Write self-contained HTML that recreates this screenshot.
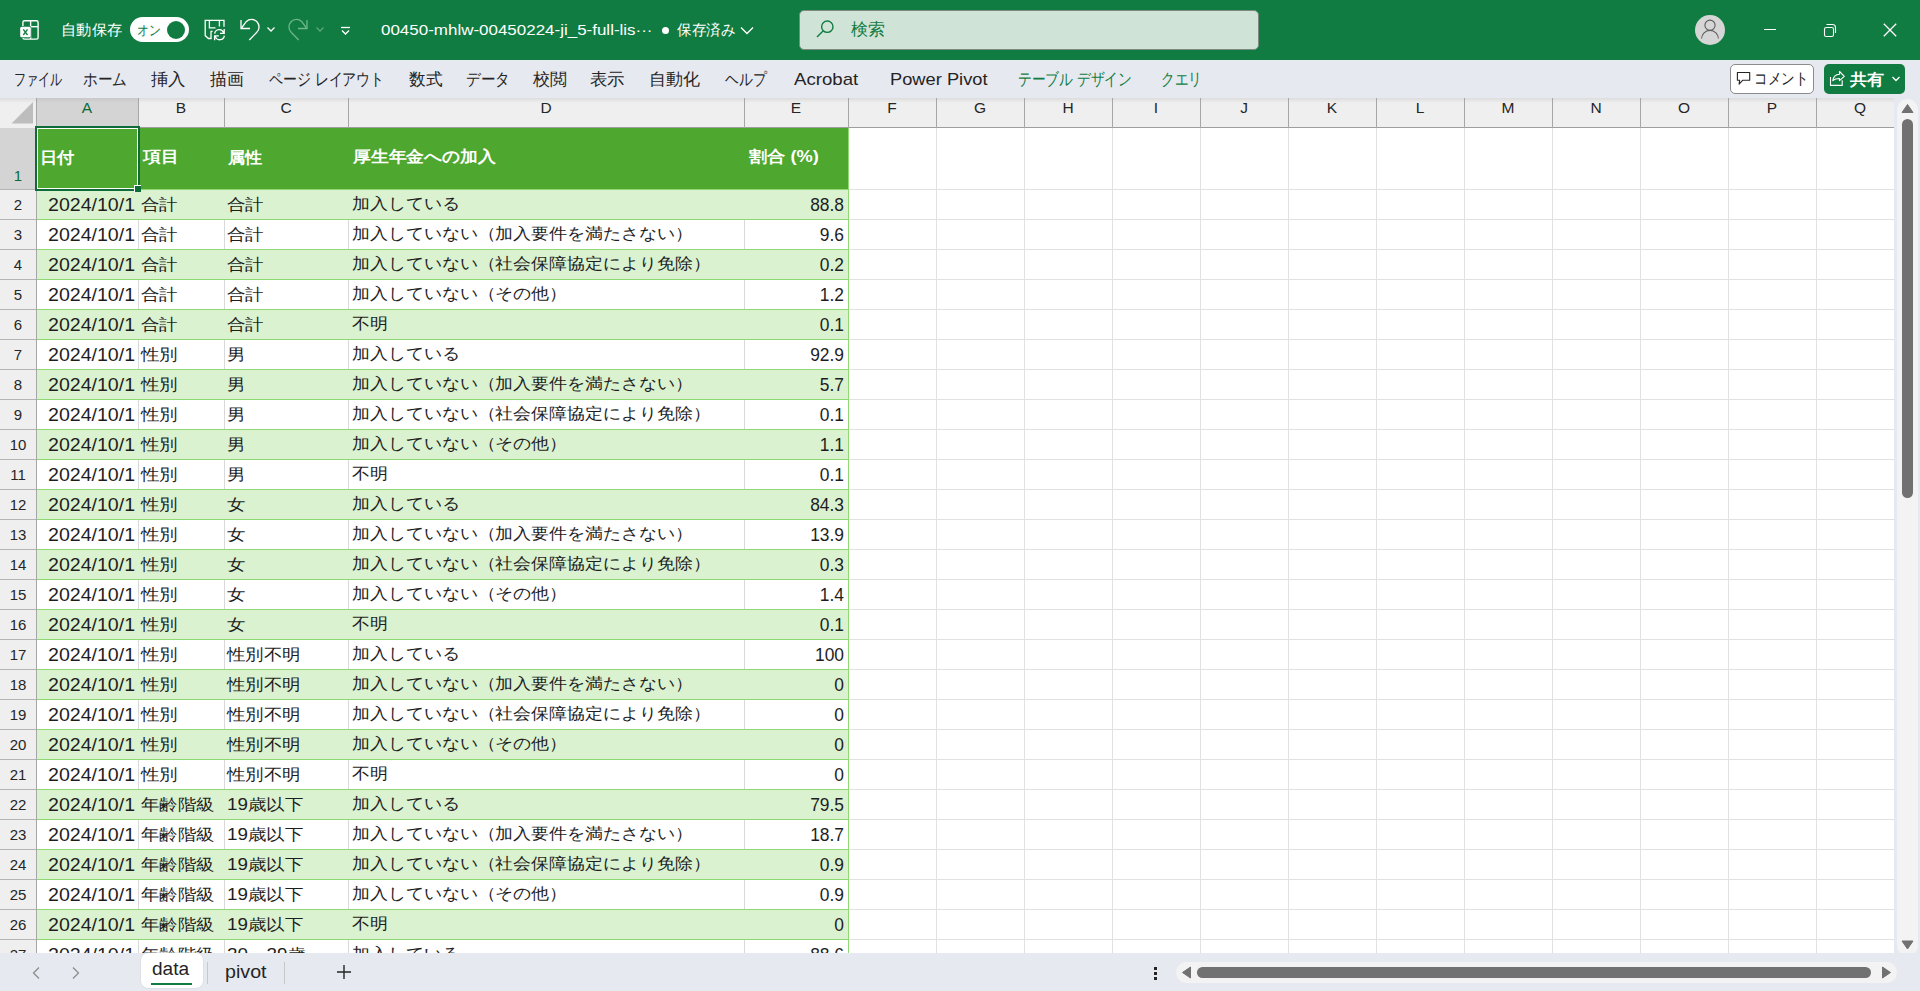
<!DOCTYPE html><html><head><meta charset="utf-8"><style>
*{margin:0;padding:0;box-sizing:border-box}
html,body{width:1920px;height:991px;overflow:hidden;background:#fff;font-family:"Liberation Sans",sans-serif;position:relative}
.a{position:absolute}
.t{position:absolute;white-space:nowrap;line-height:1}
.ch{position:absolute;top:98px;height:30px;background:linear-gradient(#dcdcdc,#efefef 5px,#efefef);border-right:1px solid #a6a6a6;border-bottom:1px solid #9e9e9e}
.rh{position:absolute;left:0;width:37px;background:#efefef;border-right:1px solid #a6a6a6;border-bottom:1px solid #c4c4c4}
</style></head><body>
<div class="a" style="left:0;top:0;width:1920px;height:60px;background:#107c41"></div>
<svg class="a" style="left:18px;top:18px" width="24" height="24" viewBox="0 0 24 24">
<rect x="4.9" y="2.7" width="15.2" height="18.4" rx="1.6" fill="none" stroke="#fff" stroke-width="1.4"/>
<line x1="12.6" y1="2.7" x2="12.6" y2="21" stroke="#fff" stroke-width="1.4"/>
<line x1="12.6" y1="8.7" x2="20" y2="8.7" stroke="#fff" stroke-width="1.4"/>
<rect x="1.4" y="7.9" width="12" height="12" rx="1.8" fill="#107c41"/>
<rect x="2.2" y="8.7" width="10.6" height="10.6" rx="1.5" fill="#fff"/>
<path d="M5.3 11.3L9.5 17M9.5 11.3L5.3 17" stroke="#107c41" stroke-width="1.3"/>
</svg>
<div class="t" id="t_auto" style="left:60.56px;top:22.00px;font-size:15px;color:#fff;transform:scaleX(1.0176);transform-origin:0 0;">自動保存</div>
<div class="a" style="left:130px;top:17px;width:59px;height:25px;border-radius:13px;background:#fff"></div>
<div class="t" id="t_on" style="left:137.15px;top:22.55px;font-size:14px;color:#107c41;transform:scaleX(0.8462);transform-origin:0 0;">オン</div>
<div class="a" style="left:167px;top:21px;width:18px;height:18px;border-radius:9px;background:#107c41"></div>
<svg class="a" style="left:202px;top:18px" width="24" height="24" viewBox="0 0 24 24" fill="none" stroke="#fff" stroke-width="1.3">
<path d="M9.6 20.5H6.4L3.2 17.6V2.3H22V8.7"/><path d="M7.4 2.3V9.9H13.5M17.4 2.3V8.6"/><path d="M9 20.5V13.4H10.6"/>
<path d="M12.7 15.6A4.6 4.6 0 0 1 21.6 14.6M22.2 11V15.3H18"/><path d="M22.3 17.6A4.6 4.6 0 0 1 13.3 18.4M12.6 22.2V17.8H16.8"/>
</svg>
<svg class="a" style="left:238px;top:18px" width="24" height="24" viewBox="0 0 24 24" fill="none" stroke="#fff" stroke-width="1.3">
<path d="M3 2v8.5h9"/><path d="M3.5 10L8.2 3.7A7.5 7.5 0 1 1 18.6 14.5L11.3 22"/></svg>
<svg class="a" style="left:266px;top:25px" width="10" height="8" viewBox="0 0 10 8" fill="none" stroke="#fff" stroke-width="1.3"><path d="M1.5 2.5l3.5 3.5 3.5-3.5"/></svg>
<svg class="a" style="left:286px;top:18px" width="24" height="24" viewBox="0 0 24 24" fill="none" stroke="#6fb68b" stroke-width="1.3">
<path d="M21 2v8.5h-9"/><path d="M20.5 10L15.8 3.7A7.5 7.5 0 1 0 5.4 14.5L12.7 22"/></svg>
<svg class="a" style="left:315px;top:25px" width="10" height="8" viewBox="0 0 10 8" fill="none" stroke="#5aa77a" stroke-width="1.3"><path d="M1.5 2.5l3.5 3.5 3.5-3.5"/></svg>
<svg class="a" style="left:338px;top:22px" width="14" height="16" viewBox="0 0 14 16" fill="none" stroke="#fff" stroke-width="1.3"><path d="M3 5.5h9"/><path d="M4 8.5l3.5 3.5 3.5-3.5"/></svg>
<div class="t" id="t_file" style="left:380.87px;top:22.00px;font-size:15px;color:#fff;transform:scaleX(1.1308);transform-origin:0 0;">00450-mhlw-00450224-ji_5-full-lis···</div>
<div class="a" style="left:662px;top:27px;width:7px;height:7px;border-radius:4px;background:#fff"></div>
<div class="t" id="t_saved" style="left:677.00px;top:22.00px;font-size:15px;color:#fff;transform:scaleX(0.9695);transform-origin:0 0;">保存済み</div>
<svg class="a" style="left:739px;top:22px" width="16" height="16" viewBox="0 0 16 16" fill="none" stroke="#fff" stroke-width="1.3"><path d="M2 5.5l6 6 6-6"/></svg>
<div class="a" style="left:799px;top:10px;width:460px;height:40px;border-radius:5px;background:#d0e3d7;border:1px solid #7d8a82"></div>
<svg class="a" style="left:814px;top:18px" width="24" height="24" viewBox="0 0 24 24" fill="none" stroke="#107c41" stroke-width="1.4"><circle cx="13.3" cy="8.7" r="5.7"/><path d="M9.3 12.7L3 19"/></svg>
<div class="t" id="t_search" style="left:851.00px;top:21.00px;font-size:17px;color:#107c41;">検索</div>
<svg class="a" style="left:1695px;top:15px" width="30" height="30" viewBox="0 0 30 30">
<circle cx="15" cy="15" r="15" fill="#d6d6d6"/><circle cx="15" cy="10.2" r="5.1" fill="none" stroke="#5c5c5c" stroke-width="1.1"/>
<path d="M6.6 23.6A8.4 8.2 0 0 1 23.4 23.6" fill="none" stroke="#5c5c5c" stroke-width="1.1"/></svg>
<div class="a" style="left:1764px;top:29px;width:12px;height:1px;background:#fff"></div>
<svg class="a" style="left:1820px;top:20px" width="20" height="20" viewBox="0 0 20 20" fill="none" stroke="#fff" stroke-width="1.1">
<rect x="4.5" y="7.5" width="9" height="9" rx="1.8"/><path d="M6.5 4.5H12.5Q15.5 4.5 15.5 7.5V13"/></svg>
<svg class="a" style="left:1880px;top:20px" width="20" height="20" viewBox="0 0 20 20" fill="none" stroke="#fff" stroke-width="1.3">
<path d="M3.8 3.8l12.4 12.4M16.2 3.8L3.8 16.2"/></svg>
<div class="a" style="left:0;top:60px;width:1920px;height:38px;background:#e6e9ef"></div>
<div class="t" id="tab0" style="left:13.78px;top:70.90px;font-size:17px;color:#242424;transform:scaleX(0.7091);transform-origin:0 0;">ファイル</div>
<div class="t" id="tab1" style="left:82.93px;top:70.90px;font-size:17px;color:#242424;transform:scaleX(0.8614);transform-origin:0 0;">ホーム</div>
<div class="t" id="tab2" style="left:151.00px;top:70.90px;font-size:17px;color:#242424;transform:scaleX(1.0244);transform-origin:0 0;">挿入</div>
<div class="t" id="tab3" style="left:209.79px;top:70.90px;font-size:17px;color:#242424;transform:scaleX(0.9883);transform-origin:0 0;">描画</div>
<div class="t" id="tab4" style="left:268.78px;top:70.90px;font-size:17px;color:#242424;transform:scaleX(0.8191);transform-origin:0 0;">ページ レイアウト</div>
<div class="t" id="tab5" style="left:408.60px;top:70.90px;font-size:17px;color:#242424;transform:scaleX(0.9819);transform-origin:0 0;">数式</div>
<div class="t" id="tab6" style="left:466.14px;top:70.90px;font-size:17px;color:#242424;transform:scaleX(0.8596);transform-origin:0 0;">データ</div>
<div class="t" id="tab7" style="left:533.00px;top:70.90px;font-size:17px;color:#242424;">校閲</div>
<div class="t" id="tab8" style="left:589.97px;top:70.90px;font-size:17px;color:#242424;transform:scaleX(1.0253);transform-origin:0 0;">表示</div>
<div class="t" id="tab9" style="left:648.80px;top:70.90px;font-size:17px;color:#242424;">自動化</div>
<div class="t" id="tab10" style="left:724.81px;top:70.90px;font-size:17px;color:#242424;transform:scaleX(0.8117);transform-origin:0 0;">ヘルプ</div>
<div class="t" id="tab11" style="left:794.40px;top:70.90px;font-size:17px;color:#242424;transform:scaleX(1.0951);transform-origin:0 0;">Acrobat</div>
<div class="t" id="tab12" style="left:890.12px;top:70.90px;font-size:17px;color:#242424;transform:scaleX(1.0756);transform-origin:0 0;">Power Pivot</div>
<div class="t" id="tab13" style="left:1018.19px;top:70.90px;font-size:17px;color:#107c41;transform:scaleX(0.8086);transform-origin:0 0;">テーブル デザイン</div>
<div class="t" id="tab14" style="left:1160.80px;top:70.90px;font-size:17px;color:#107c41;transform:scaleX(0.8002);transform-origin:0 0;">クエリ</div>
<div class="a" style="left:1730px;top:64px;width:84px;height:30px;border-radius:5px;background:#fff;border:1px solid #8c8c8c"></div>
<svg class="a" style="left:1735px;top:71px" width="16" height="16" viewBox="0 0 16 16" fill="none" stroke="#242424" stroke-width="1.1"><path d="M2.4 1.5H14.7V9.3H7.6L4.1 13.2L4.6 9.3H2.4Z" stroke-linejoin="round"/></svg>
<div class="t" id="t_comment" style="left:1754.31px;top:71.10px;font-size:16px;color:#242424;transform:scaleX(0.8448);transform-origin:0 0;">コメント</div>
<div class="a" style="left:1824px;top:64px;width:81px;height:30px;border-radius:5px;background:#107c41"></div>
<svg class="a" style="left:1829px;top:70px" width="17" height="17" viewBox="0 0 17 17" fill="none" stroke="#fff" stroke-width="1.1"><path d="M1.5 7.1V15.4H13.2V10.3"/><path d="M3.8 10.6C4.5 6.5 7 4.5 10.5 4.3V1.5L15.3 6.4L10.5 10.6V8.5C7.5 8.5 5.5 9 3.8 10.6Z" stroke-linejoin="round"/></svg>
<div class="t" id="t_share" style="left:1850.00px;top:71.60px;font-size:15.5px;color:#fff;font-weight:bold;transform:scaleX(1.0635);transform-origin:0 0;">共有</div>
<svg class="a" style="left:1890px;top:74px" width="12" height="10" viewBox="0 0 12 10" fill="none" stroke="#fff" stroke-width="1.3"><path d="M2.5 3l3.5 3.5 3.5-3.5"/></svg>
<div class="a" style="left:936px;top:128px;width:1px;height:825px;background:#e1e1e1"></div>
<div class="a" style="left:1024px;top:128px;width:1px;height:825px;background:#e1e1e1"></div>
<div class="a" style="left:1112px;top:128px;width:1px;height:825px;background:#e1e1e1"></div>
<div class="a" style="left:1200px;top:128px;width:1px;height:825px;background:#e1e1e1"></div>
<div class="a" style="left:1288px;top:128px;width:1px;height:825px;background:#e1e1e1"></div>
<div class="a" style="left:1376px;top:128px;width:1px;height:825px;background:#e1e1e1"></div>
<div class="a" style="left:1464px;top:128px;width:1px;height:825px;background:#e1e1e1"></div>
<div class="a" style="left:1552px;top:128px;width:1px;height:825px;background:#e1e1e1"></div>
<div class="a" style="left:1640px;top:128px;width:1px;height:825px;background:#e1e1e1"></div>
<div class="a" style="left:1728px;top:128px;width:1px;height:825px;background:#e1e1e1"></div>
<div class="a" style="left:1816px;top:128px;width:1px;height:825px;background:#e1e1e1"></div>
<div class="a" style="left:1904px;top:128px;width:1px;height:825px;background:#e1e1e1"></div>
<div class="a" style="left:848px;top:189px;width:1046px;height:1px;background:#e1e1e1"></div>
<div class="a" style="left:848px;top:219px;width:1046px;height:1px;background:#e1e1e1"></div>
<div class="a" style="left:848px;top:249px;width:1046px;height:1px;background:#e1e1e1"></div>
<div class="a" style="left:848px;top:279px;width:1046px;height:1px;background:#e1e1e1"></div>
<div class="a" style="left:848px;top:309px;width:1046px;height:1px;background:#e1e1e1"></div>
<div class="a" style="left:848px;top:339px;width:1046px;height:1px;background:#e1e1e1"></div>
<div class="a" style="left:848px;top:369px;width:1046px;height:1px;background:#e1e1e1"></div>
<div class="a" style="left:848px;top:399px;width:1046px;height:1px;background:#e1e1e1"></div>
<div class="a" style="left:848px;top:429px;width:1046px;height:1px;background:#e1e1e1"></div>
<div class="a" style="left:848px;top:459px;width:1046px;height:1px;background:#e1e1e1"></div>
<div class="a" style="left:848px;top:489px;width:1046px;height:1px;background:#e1e1e1"></div>
<div class="a" style="left:848px;top:519px;width:1046px;height:1px;background:#e1e1e1"></div>
<div class="a" style="left:848px;top:549px;width:1046px;height:1px;background:#e1e1e1"></div>
<div class="a" style="left:848px;top:579px;width:1046px;height:1px;background:#e1e1e1"></div>
<div class="a" style="left:848px;top:609px;width:1046px;height:1px;background:#e1e1e1"></div>
<div class="a" style="left:848px;top:639px;width:1046px;height:1px;background:#e1e1e1"></div>
<div class="a" style="left:848px;top:669px;width:1046px;height:1px;background:#e1e1e1"></div>
<div class="a" style="left:848px;top:699px;width:1046px;height:1px;background:#e1e1e1"></div>
<div class="a" style="left:848px;top:729px;width:1046px;height:1px;background:#e1e1e1"></div>
<div class="a" style="left:848px;top:759px;width:1046px;height:1px;background:#e1e1e1"></div>
<div class="a" style="left:848px;top:789px;width:1046px;height:1px;background:#e1e1e1"></div>
<div class="a" style="left:848px;top:819px;width:1046px;height:1px;background:#e1e1e1"></div>
<div class="a" style="left:848px;top:849px;width:1046px;height:1px;background:#e1e1e1"></div>
<div class="a" style="left:848px;top:879px;width:1046px;height:1px;background:#e1e1e1"></div>
<div class="a" style="left:848px;top:909px;width:1046px;height:1px;background:#e1e1e1"></div>
<div class="a" style="left:848px;top:939px;width:1046px;height:1px;background:#e1e1e1"></div>
<div class="ch" style="left:0;width:37px"></div>
<svg class="a" style="left:0;top:98px" width="36" height="29"><path d="M33 4V25.5H11.5Z" fill="#bdbdbd"/></svg>
<div class="ch" style="left:36px;width:103px;background:linear-gradient(#c9c9c9,#d4d4d4 5px,#d4d4d4);"></div>
<div class="t" style="left:36px;width:102px;text-align:center;top:100px;font-size:15.5px;color:#0e6b38;line-height:1">A</div>
<div class="ch" style="left:138px;width:87px;"></div>
<div class="t" style="left:138px;width:86px;text-align:center;top:100px;font-size:15.5px;color:#262626;line-height:1">B</div>
<div class="ch" style="left:224px;width:125px;"></div>
<div class="t" style="left:224px;width:124px;text-align:center;top:100px;font-size:15.5px;color:#262626;line-height:1">C</div>
<div class="ch" style="left:348px;width:397px;"></div>
<div class="t" style="left:348px;width:396px;text-align:center;top:100px;font-size:15.5px;color:#262626;line-height:1">D</div>
<div class="ch" style="left:744px;width:105px;"></div>
<div class="t" style="left:744px;width:104px;text-align:center;top:100px;font-size:15.5px;color:#262626;line-height:1">E</div>
<div class="ch" style="left:848px;width:89px;"></div>
<div class="t" style="left:848px;width:88px;text-align:center;top:100px;font-size:15.5px;color:#262626;line-height:1">F</div>
<div class="ch" style="left:936px;width:89px;"></div>
<div class="t" style="left:936px;width:88px;text-align:center;top:100px;font-size:15.5px;color:#262626;line-height:1">G</div>
<div class="ch" style="left:1024px;width:89px;"></div>
<div class="t" style="left:1024px;width:88px;text-align:center;top:100px;font-size:15.5px;color:#262626;line-height:1">H</div>
<div class="ch" style="left:1112px;width:89px;"></div>
<div class="t" style="left:1112px;width:88px;text-align:center;top:100px;font-size:15.5px;color:#262626;line-height:1">I</div>
<div class="ch" style="left:1200px;width:89px;"></div>
<div class="t" style="left:1200px;width:88px;text-align:center;top:100px;font-size:15.5px;color:#262626;line-height:1">J</div>
<div class="ch" style="left:1288px;width:89px;"></div>
<div class="t" style="left:1288px;width:88px;text-align:center;top:100px;font-size:15.5px;color:#262626;line-height:1">K</div>
<div class="ch" style="left:1376px;width:89px;"></div>
<div class="t" style="left:1376px;width:88px;text-align:center;top:100px;font-size:15.5px;color:#262626;line-height:1">L</div>
<div class="ch" style="left:1464px;width:89px;"></div>
<div class="t" style="left:1464px;width:88px;text-align:center;top:100px;font-size:15.5px;color:#262626;line-height:1">M</div>
<div class="ch" style="left:1552px;width:89px;"></div>
<div class="t" style="left:1552px;width:88px;text-align:center;top:100px;font-size:15.5px;color:#262626;line-height:1">N</div>
<div class="ch" style="left:1640px;width:89px;"></div>
<div class="t" style="left:1640px;width:88px;text-align:center;top:100px;font-size:15.5px;color:#262626;line-height:1">O</div>
<div class="ch" style="left:1728px;width:89px;"></div>
<div class="t" style="left:1728px;width:88px;text-align:center;top:100px;font-size:15.5px;color:#262626;line-height:1">P</div>
<div class="ch" style="left:1816px;width:78px;border-right:none;"></div>
<div class="t" style="left:1816px;width:88px;text-align:center;top:100px;font-size:15.5px;color:#262626;line-height:1">Q</div>
<div class="a" style="left:138px;top:98px;width:1px;height:30px;background:#a6a6a6"></div>
<div class="a" style="left:224px;top:98px;width:1px;height:30px;background:#a6a6a6"></div>
<div class="a" style="left:348px;top:98px;width:1px;height:30px;background:#a6a6a6"></div>
<div class="a" style="left:744px;top:98px;width:1px;height:30px;background:#a6a6a6"></div>
<div class="a" style="left:848px;top:98px;width:1px;height:30px;background:#a6a6a6"></div>
<div class="a" style="left:936px;top:98px;width:1px;height:30px;background:#a6a6a6"></div>
<div class="a" style="left:1024px;top:98px;width:1px;height:30px;background:#a6a6a6"></div>
<div class="a" style="left:1112px;top:98px;width:1px;height:30px;background:#a6a6a6"></div>
<div class="a" style="left:1200px;top:98px;width:1px;height:30px;background:#a6a6a6"></div>
<div class="a" style="left:1288px;top:98px;width:1px;height:30px;background:#a6a6a6"></div>
<div class="a" style="left:1376px;top:98px;width:1px;height:30px;background:#a6a6a6"></div>
<div class="a" style="left:1464px;top:98px;width:1px;height:30px;background:#a6a6a6"></div>
<div class="a" style="left:1552px;top:98px;width:1px;height:30px;background:#a6a6a6"></div>
<div class="a" style="left:1640px;top:98px;width:1px;height:30px;background:#a6a6a6"></div>
<div class="a" style="left:1728px;top:98px;width:1px;height:30px;background:#a6a6a6"></div>
<div class="a" style="left:1816px;top:98px;width:1px;height:30px;background:#a6a6a6"></div>
<div class="a" style="left:0;top:127px;width:36px;height:826px;background:#efefef"></div>
<div class="a" style="left:0;top:128px;width:36px;height:61px;background:#d4d4d4"></div>
<div class="a" style="left:36px;top:98px;width:1px;height:855px;background:#a6a6a6"></div>
<div class="t" style="left:0;width:36px;text-align:center;top:168px;font-size:15px;color:#0e6b38">1</div>
<div class="a" style="left:0;top:189px;width:36px;height:1px;background:#b4b4b4"></div>
<div class="t" style="left:0;width:36px;text-align:center;top:197px;font-size:15px;color:#262626">2</div>
<div class="a" style="left:0;top:219px;width:36px;height:1px;background:#b4b4b4"></div>
<div class="t" style="left:0;width:36px;text-align:center;top:227px;font-size:15px;color:#262626">3</div>
<div class="a" style="left:0;top:249px;width:36px;height:1px;background:#b4b4b4"></div>
<div class="t" style="left:0;width:36px;text-align:center;top:257px;font-size:15px;color:#262626">4</div>
<div class="a" style="left:0;top:279px;width:36px;height:1px;background:#b4b4b4"></div>
<div class="t" style="left:0;width:36px;text-align:center;top:287px;font-size:15px;color:#262626">5</div>
<div class="a" style="left:0;top:309px;width:36px;height:1px;background:#b4b4b4"></div>
<div class="t" style="left:0;width:36px;text-align:center;top:317px;font-size:15px;color:#262626">6</div>
<div class="a" style="left:0;top:339px;width:36px;height:1px;background:#b4b4b4"></div>
<div class="t" style="left:0;width:36px;text-align:center;top:347px;font-size:15px;color:#262626">7</div>
<div class="a" style="left:0;top:369px;width:36px;height:1px;background:#b4b4b4"></div>
<div class="t" style="left:0;width:36px;text-align:center;top:377px;font-size:15px;color:#262626">8</div>
<div class="a" style="left:0;top:399px;width:36px;height:1px;background:#b4b4b4"></div>
<div class="t" style="left:0;width:36px;text-align:center;top:407px;font-size:15px;color:#262626">9</div>
<div class="a" style="left:0;top:429px;width:36px;height:1px;background:#b4b4b4"></div>
<div class="t" style="left:0;width:36px;text-align:center;top:437px;font-size:15px;color:#262626">10</div>
<div class="a" style="left:0;top:459px;width:36px;height:1px;background:#b4b4b4"></div>
<div class="t" style="left:0;width:36px;text-align:center;top:467px;font-size:15px;color:#262626">11</div>
<div class="a" style="left:0;top:489px;width:36px;height:1px;background:#b4b4b4"></div>
<div class="t" style="left:0;width:36px;text-align:center;top:497px;font-size:15px;color:#262626">12</div>
<div class="a" style="left:0;top:519px;width:36px;height:1px;background:#b4b4b4"></div>
<div class="t" style="left:0;width:36px;text-align:center;top:527px;font-size:15px;color:#262626">13</div>
<div class="a" style="left:0;top:549px;width:36px;height:1px;background:#b4b4b4"></div>
<div class="t" style="left:0;width:36px;text-align:center;top:557px;font-size:15px;color:#262626">14</div>
<div class="a" style="left:0;top:579px;width:36px;height:1px;background:#b4b4b4"></div>
<div class="t" style="left:0;width:36px;text-align:center;top:587px;font-size:15px;color:#262626">15</div>
<div class="a" style="left:0;top:609px;width:36px;height:1px;background:#b4b4b4"></div>
<div class="t" style="left:0;width:36px;text-align:center;top:617px;font-size:15px;color:#262626">16</div>
<div class="a" style="left:0;top:639px;width:36px;height:1px;background:#b4b4b4"></div>
<div class="t" style="left:0;width:36px;text-align:center;top:647px;font-size:15px;color:#262626">17</div>
<div class="a" style="left:0;top:669px;width:36px;height:1px;background:#b4b4b4"></div>
<div class="t" style="left:0;width:36px;text-align:center;top:677px;font-size:15px;color:#262626">18</div>
<div class="a" style="left:0;top:699px;width:36px;height:1px;background:#b4b4b4"></div>
<div class="t" style="left:0;width:36px;text-align:center;top:707px;font-size:15px;color:#262626">19</div>
<div class="a" style="left:0;top:729px;width:36px;height:1px;background:#b4b4b4"></div>
<div class="t" style="left:0;width:36px;text-align:center;top:737px;font-size:15px;color:#262626">20</div>
<div class="a" style="left:0;top:759px;width:36px;height:1px;background:#b4b4b4"></div>
<div class="t" style="left:0;width:36px;text-align:center;top:767px;font-size:15px;color:#262626">21</div>
<div class="a" style="left:0;top:789px;width:36px;height:1px;background:#b4b4b4"></div>
<div class="t" style="left:0;width:36px;text-align:center;top:797px;font-size:15px;color:#262626">22</div>
<div class="a" style="left:0;top:819px;width:36px;height:1px;background:#b4b4b4"></div>
<div class="t" style="left:0;width:36px;text-align:center;top:827px;font-size:15px;color:#262626">23</div>
<div class="a" style="left:0;top:849px;width:36px;height:1px;background:#b4b4b4"></div>
<div class="t" style="left:0;width:36px;text-align:center;top:857px;font-size:15px;color:#262626">24</div>
<div class="a" style="left:0;top:879px;width:36px;height:1px;background:#b4b4b4"></div>
<div class="t" style="left:0;width:36px;text-align:center;top:887px;font-size:15px;color:#262626">25</div>
<div class="a" style="left:0;top:909px;width:36px;height:1px;background:#b4b4b4"></div>
<div class="t" style="left:0;width:36px;text-align:center;top:917px;font-size:15px;color:#262626">26</div>
<div class="a" style="left:0;top:939px;width:36px;height:1px;background:#b4b4b4"></div>
<div class="a" style="left:0;top:940px;width:36px;height:13px;overflow:hidden"><div class="t" style="left:0;width:36px;text-align:center;top:7px;font-size:15px;color:#262626">27</div></div>
<div class="a" style="left:37px;top:128px;width:811px;height:61px;background:#4ea72e"></div>
<div class="t" id="hdr0" style="left:40.44px;top:149.90px;font-size:16px;color:#fff;font-weight:bold;transform:scaleX(1.0800);transform-origin:0 0;">日付</div>
<div class="t" id="hdr1" style="left:142.60px;top:149.00px;font-size:16px;color:#fff;font-weight:bold;transform:scaleX(1.1242);transform-origin:0 0;">項目</div>
<div class="t" id="hdr2" style="left:228.21px;top:150.00px;font-size:16px;color:#fff;font-weight:bold;transform:scaleX(1.0725);transform-origin:0 0;">属性</div>
<div class="t" id="hdr3" style="left:352.60px;top:149.00px;font-size:16px;color:#fff;font-weight:bold;transform:scaleX(1.1125);transform-origin:0 0;">厚生年金への加入</div>
<div class="t" id="hdr4" style="left:748.50px;top:149.00px;font-size:16px;color:#fff;font-weight:bold;transform:scaleX(1.1395);transform-origin:0 0;">割合 (%)</div>
<div class="a" style="left:37px;top:189px;width:811px;height:30px;background:#daf2d0;overflow:hidden">
<div class="t" id="r2a" style="right:713.12px;top:6.90px;font-size:18px;color:#1e1e1e;transform:scaleX(1.0872);transform-origin:100% 0;">2024/10/1</div>
<div class="t" id="r2b" style="left:104.44px;top:6.70px;font-size:16.3px;color:#1e1e1e;transform:scaleX(1.1556);transform-origin:0 0;">合計</div>
<div class="t" id="r2c" style="left:190.44px;top:6.70px;font-size:16.3px;color:#1e1e1e;transform:scaleX(1.1556);transform-origin:0 0;">合計</div>
<div class="t" id="r2d" style="left:314.88px;top:6.00px;font-size:16.3px;color:#1e1e1e;transform:scaleX(1.1208);transform-origin:0 0;">加入している</div>
<div class="t" id="r2e" style="right:3.99px;top:7.20px;font-size:18px;color:#1e1e1e;transform:scaleX(0.9659);transform-origin:100% 0;">88.8</div>
</div>
<div class="a" style="left:37px;top:219px;width:811px;height:30px;background:#fff;overflow:hidden">
<div class="a" style="left:101px;top:0;width:1px;height:30px;background:#d9d9d9"></div>
<div class="a" style="left:187px;top:0;width:1px;height:30px;background:#d9d9d9"></div>
<div class="a" style="left:311px;top:0;width:1px;height:30px;background:#d9d9d9"></div>
<div class="a" style="left:707px;top:0;width:1px;height:30px;background:#d9d9d9"></div>
<div class="t" id="r3a" style="right:713.12px;top:6.90px;font-size:18px;color:#1e1e1e;transform:scaleX(1.0872);transform-origin:100% 0;">2024/10/1</div>
<div class="t" id="r3b" style="left:104.44px;top:6.70px;font-size:16.3px;color:#1e1e1e;transform:scaleX(1.1556);transform-origin:0 0;">合計</div>
<div class="t" id="r3c" style="left:190.44px;top:6.70px;font-size:16.3px;color:#1e1e1e;transform:scaleX(1.1556);transform-origin:0 0;">合計</div>
<div class="t" id="r3d" style="left:314.88px;top:6.00px;font-size:16.3px;color:#1e1e1e;transform:scaleX(1.1208);transform-origin:0 0;">加入していない（加入要件を満たさない）</div>
<div class="t" id="r3e" style="right:3.99px;top:7.20px;font-size:18px;color:#1e1e1e;transform:scaleX(0.9659);transform-origin:100% 0;">9.6</div>
</div>
<div class="a" style="left:37px;top:249px;width:811px;height:30px;background:#daf2d0;overflow:hidden">
<div class="t" id="r4a" style="right:713.12px;top:6.90px;font-size:18px;color:#1e1e1e;transform:scaleX(1.0872);transform-origin:100% 0;">2024/10/1</div>
<div class="t" id="r4b" style="left:104.44px;top:6.70px;font-size:16.3px;color:#1e1e1e;transform:scaleX(1.1556);transform-origin:0 0;">合計</div>
<div class="t" id="r4c" style="left:190.44px;top:6.70px;font-size:16.3px;color:#1e1e1e;transform:scaleX(1.1556);transform-origin:0 0;">合計</div>
<div class="t" id="r4d" style="left:314.88px;top:6.00px;font-size:16.3px;color:#1e1e1e;transform:scaleX(1.1208);transform-origin:0 0;">加入していない（社会保障協定により免除）</div>
<div class="t" id="r4e" style="right:3.99px;top:7.20px;font-size:18px;color:#1e1e1e;transform:scaleX(0.9659);transform-origin:100% 0;">0.2</div>
</div>
<div class="a" style="left:37px;top:279px;width:811px;height:30px;background:#fff;overflow:hidden">
<div class="a" style="left:101px;top:0;width:1px;height:30px;background:#d9d9d9"></div>
<div class="a" style="left:187px;top:0;width:1px;height:30px;background:#d9d9d9"></div>
<div class="a" style="left:311px;top:0;width:1px;height:30px;background:#d9d9d9"></div>
<div class="a" style="left:707px;top:0;width:1px;height:30px;background:#d9d9d9"></div>
<div class="t" id="r5a" style="right:713.12px;top:6.90px;font-size:18px;color:#1e1e1e;transform:scaleX(1.0872);transform-origin:100% 0;">2024/10/1</div>
<div class="t" id="r5b" style="left:104.44px;top:6.70px;font-size:16.3px;color:#1e1e1e;transform:scaleX(1.1556);transform-origin:0 0;">合計</div>
<div class="t" id="r5c" style="left:190.44px;top:6.70px;font-size:16.3px;color:#1e1e1e;transform:scaleX(1.1556);transform-origin:0 0;">合計</div>
<div class="t" id="r5d" style="left:314.88px;top:6.00px;font-size:16.3px;color:#1e1e1e;transform:scaleX(1.1208);transform-origin:0 0;">加入していない（その他）</div>
<div class="t" id="r5e" style="right:3.99px;top:7.20px;font-size:18px;color:#1e1e1e;transform:scaleX(0.9659);transform-origin:100% 0;">1.2</div>
</div>
<div class="a" style="left:37px;top:309px;width:811px;height:30px;background:#daf2d0;overflow:hidden">
<div class="t" id="r6a" style="right:713.12px;top:6.90px;font-size:18px;color:#1e1e1e;transform:scaleX(1.0872);transform-origin:100% 0;">2024/10/1</div>
<div class="t" id="r6b" style="left:104.44px;top:6.70px;font-size:16.3px;color:#1e1e1e;transform:scaleX(1.1556);transform-origin:0 0;">合計</div>
<div class="t" id="r6c" style="left:190.44px;top:6.70px;font-size:16.3px;color:#1e1e1e;transform:scaleX(1.1556);transform-origin:0 0;">合計</div>
<div class="t" id="r6d" style="left:314.88px;top:6.00px;font-size:16.3px;color:#1e1e1e;transform:scaleX(1.1208);transform-origin:0 0;">不明</div>
<div class="t" id="r6e" style="right:3.99px;top:7.20px;font-size:18px;color:#1e1e1e;transform:scaleX(0.9659);transform-origin:100% 0;">0.1</div>
</div>
<div class="a" style="left:37px;top:339px;width:811px;height:30px;background:#fff;overflow:hidden">
<div class="a" style="left:101px;top:0;width:1px;height:30px;background:#d9d9d9"></div>
<div class="a" style="left:187px;top:0;width:1px;height:30px;background:#d9d9d9"></div>
<div class="a" style="left:311px;top:0;width:1px;height:30px;background:#d9d9d9"></div>
<div class="a" style="left:707px;top:0;width:1px;height:30px;background:#d9d9d9"></div>
<div class="t" id="r7a" style="right:713.12px;top:6.90px;font-size:18px;color:#1e1e1e;transform:scaleX(1.0872);transform-origin:100% 0;">2024/10/1</div>
<div class="t" id="r7b" style="left:104.44px;top:6.70px;font-size:16.3px;color:#1e1e1e;transform:scaleX(1.1556);transform-origin:0 0;">性別</div>
<div class="t" id="r7c" style="left:190.44px;top:6.70px;font-size:16.3px;color:#1e1e1e;transform:scaleX(1.1556);transform-origin:0 0;">男</div>
<div class="t" id="r7d" style="left:314.88px;top:6.00px;font-size:16.3px;color:#1e1e1e;transform:scaleX(1.1208);transform-origin:0 0;">加入している</div>
<div class="t" id="r7e" style="right:3.99px;top:7.20px;font-size:18px;color:#1e1e1e;transform:scaleX(0.9659);transform-origin:100% 0;">92.9</div>
</div>
<div class="a" style="left:37px;top:369px;width:811px;height:30px;background:#daf2d0;overflow:hidden">
<div class="t" id="r8a" style="right:713.12px;top:6.90px;font-size:18px;color:#1e1e1e;transform:scaleX(1.0872);transform-origin:100% 0;">2024/10/1</div>
<div class="t" id="r8b" style="left:104.44px;top:6.70px;font-size:16.3px;color:#1e1e1e;transform:scaleX(1.1556);transform-origin:0 0;">性別</div>
<div class="t" id="r8c" style="left:190.44px;top:6.70px;font-size:16.3px;color:#1e1e1e;transform:scaleX(1.1556);transform-origin:0 0;">男</div>
<div class="t" id="r8d" style="left:314.88px;top:6.00px;font-size:16.3px;color:#1e1e1e;transform:scaleX(1.1208);transform-origin:0 0;">加入していない（加入要件を満たさない）</div>
<div class="t" id="r8e" style="right:3.99px;top:7.20px;font-size:18px;color:#1e1e1e;transform:scaleX(0.9659);transform-origin:100% 0;">5.7</div>
</div>
<div class="a" style="left:37px;top:399px;width:811px;height:30px;background:#fff;overflow:hidden">
<div class="a" style="left:101px;top:0;width:1px;height:30px;background:#d9d9d9"></div>
<div class="a" style="left:187px;top:0;width:1px;height:30px;background:#d9d9d9"></div>
<div class="a" style="left:311px;top:0;width:1px;height:30px;background:#d9d9d9"></div>
<div class="a" style="left:707px;top:0;width:1px;height:30px;background:#d9d9d9"></div>
<div class="t" id="r9a" style="right:713.12px;top:6.90px;font-size:18px;color:#1e1e1e;transform:scaleX(1.0872);transform-origin:100% 0;">2024/10/1</div>
<div class="t" id="r9b" style="left:104.44px;top:6.70px;font-size:16.3px;color:#1e1e1e;transform:scaleX(1.1556);transform-origin:0 0;">性別</div>
<div class="t" id="r9c" style="left:190.44px;top:6.70px;font-size:16.3px;color:#1e1e1e;transform:scaleX(1.1556);transform-origin:0 0;">男</div>
<div class="t" id="r9d" style="left:314.88px;top:6.00px;font-size:16.3px;color:#1e1e1e;transform:scaleX(1.1208);transform-origin:0 0;">加入していない（社会保障協定により免除）</div>
<div class="t" id="r9e" style="right:3.99px;top:7.20px;font-size:18px;color:#1e1e1e;transform:scaleX(0.9659);transform-origin:100% 0;">0.1</div>
</div>
<div class="a" style="left:37px;top:429px;width:811px;height:30px;background:#daf2d0;overflow:hidden">
<div class="t" id="r10a" style="right:713.12px;top:6.90px;font-size:18px;color:#1e1e1e;transform:scaleX(1.0872);transform-origin:100% 0;">2024/10/1</div>
<div class="t" id="r10b" style="left:104.44px;top:6.70px;font-size:16.3px;color:#1e1e1e;transform:scaleX(1.1556);transform-origin:0 0;">性別</div>
<div class="t" id="r10c" style="left:190.44px;top:6.70px;font-size:16.3px;color:#1e1e1e;transform:scaleX(1.1556);transform-origin:0 0;">男</div>
<div class="t" id="r10d" style="left:314.88px;top:6.00px;font-size:16.3px;color:#1e1e1e;transform:scaleX(1.1208);transform-origin:0 0;">加入していない（その他）</div>
<div class="t" id="r10e" style="right:3.99px;top:7.20px;font-size:18px;color:#1e1e1e;transform:scaleX(0.9659);transform-origin:100% 0;">1.1</div>
</div>
<div class="a" style="left:37px;top:459px;width:811px;height:30px;background:#fff;overflow:hidden">
<div class="a" style="left:101px;top:0;width:1px;height:30px;background:#d9d9d9"></div>
<div class="a" style="left:187px;top:0;width:1px;height:30px;background:#d9d9d9"></div>
<div class="a" style="left:311px;top:0;width:1px;height:30px;background:#d9d9d9"></div>
<div class="a" style="left:707px;top:0;width:1px;height:30px;background:#d9d9d9"></div>
<div class="t" id="r11a" style="right:713.12px;top:6.90px;font-size:18px;color:#1e1e1e;transform:scaleX(1.0872);transform-origin:100% 0;">2024/10/1</div>
<div class="t" id="r11b" style="left:104.44px;top:6.70px;font-size:16.3px;color:#1e1e1e;transform:scaleX(1.1556);transform-origin:0 0;">性別</div>
<div class="t" id="r11c" style="left:190.44px;top:6.70px;font-size:16.3px;color:#1e1e1e;transform:scaleX(1.1556);transform-origin:0 0;">男</div>
<div class="t" id="r11d" style="left:314.88px;top:6.00px;font-size:16.3px;color:#1e1e1e;transform:scaleX(1.1208);transform-origin:0 0;">不明</div>
<div class="t" id="r11e" style="right:3.99px;top:7.20px;font-size:18px;color:#1e1e1e;transform:scaleX(0.9659);transform-origin:100% 0;">0.1</div>
</div>
<div class="a" style="left:37px;top:489px;width:811px;height:30px;background:#daf2d0;overflow:hidden">
<div class="t" id="r12a" style="right:713.12px;top:6.90px;font-size:18px;color:#1e1e1e;transform:scaleX(1.0872);transform-origin:100% 0;">2024/10/1</div>
<div class="t" id="r12b" style="left:104.44px;top:6.70px;font-size:16.3px;color:#1e1e1e;transform:scaleX(1.1556);transform-origin:0 0;">性別</div>
<div class="t" id="r12c" style="left:190.44px;top:6.70px;font-size:16.3px;color:#1e1e1e;transform:scaleX(1.1556);transform-origin:0 0;">女</div>
<div class="t" id="r12d" style="left:314.88px;top:6.00px;font-size:16.3px;color:#1e1e1e;transform:scaleX(1.1208);transform-origin:0 0;">加入している</div>
<div class="t" id="r12e" style="right:3.99px;top:7.20px;font-size:18px;color:#1e1e1e;transform:scaleX(0.9659);transform-origin:100% 0;">84.3</div>
</div>
<div class="a" style="left:37px;top:519px;width:811px;height:30px;background:#fff;overflow:hidden">
<div class="a" style="left:101px;top:0;width:1px;height:30px;background:#d9d9d9"></div>
<div class="a" style="left:187px;top:0;width:1px;height:30px;background:#d9d9d9"></div>
<div class="a" style="left:311px;top:0;width:1px;height:30px;background:#d9d9d9"></div>
<div class="a" style="left:707px;top:0;width:1px;height:30px;background:#d9d9d9"></div>
<div class="t" id="r13a" style="right:713.12px;top:6.90px;font-size:18px;color:#1e1e1e;transform:scaleX(1.0872);transform-origin:100% 0;">2024/10/1</div>
<div class="t" id="r13b" style="left:104.44px;top:6.70px;font-size:16.3px;color:#1e1e1e;transform:scaleX(1.1556);transform-origin:0 0;">性別</div>
<div class="t" id="r13c" style="left:190.44px;top:6.70px;font-size:16.3px;color:#1e1e1e;transform:scaleX(1.1556);transform-origin:0 0;">女</div>
<div class="t" id="r13d" style="left:314.88px;top:6.00px;font-size:16.3px;color:#1e1e1e;transform:scaleX(1.1208);transform-origin:0 0;">加入していない（加入要件を満たさない）</div>
<div class="t" id="r13e" style="right:3.99px;top:7.20px;font-size:18px;color:#1e1e1e;transform:scaleX(0.9659);transform-origin:100% 0;">13.9</div>
</div>
<div class="a" style="left:37px;top:549px;width:811px;height:30px;background:#daf2d0;overflow:hidden">
<div class="t" id="r14a" style="right:713.12px;top:6.90px;font-size:18px;color:#1e1e1e;transform:scaleX(1.0872);transform-origin:100% 0;">2024/10/1</div>
<div class="t" id="r14b" style="left:104.44px;top:6.70px;font-size:16.3px;color:#1e1e1e;transform:scaleX(1.1556);transform-origin:0 0;">性別</div>
<div class="t" id="r14c" style="left:190.44px;top:6.70px;font-size:16.3px;color:#1e1e1e;transform:scaleX(1.1556);transform-origin:0 0;">女</div>
<div class="t" id="r14d" style="left:314.88px;top:6.00px;font-size:16.3px;color:#1e1e1e;transform:scaleX(1.1208);transform-origin:0 0;">加入していない（社会保障協定により免除）</div>
<div class="t" id="r14e" style="right:3.99px;top:7.20px;font-size:18px;color:#1e1e1e;transform:scaleX(0.9659);transform-origin:100% 0;">0.3</div>
</div>
<div class="a" style="left:37px;top:579px;width:811px;height:30px;background:#fff;overflow:hidden">
<div class="a" style="left:101px;top:0;width:1px;height:30px;background:#d9d9d9"></div>
<div class="a" style="left:187px;top:0;width:1px;height:30px;background:#d9d9d9"></div>
<div class="a" style="left:311px;top:0;width:1px;height:30px;background:#d9d9d9"></div>
<div class="a" style="left:707px;top:0;width:1px;height:30px;background:#d9d9d9"></div>
<div class="t" id="r15a" style="right:713.12px;top:6.90px;font-size:18px;color:#1e1e1e;transform:scaleX(1.0872);transform-origin:100% 0;">2024/10/1</div>
<div class="t" id="r15b" style="left:104.44px;top:6.70px;font-size:16.3px;color:#1e1e1e;transform:scaleX(1.1556);transform-origin:0 0;">性別</div>
<div class="t" id="r15c" style="left:190.44px;top:6.70px;font-size:16.3px;color:#1e1e1e;transform:scaleX(1.1556);transform-origin:0 0;">女</div>
<div class="t" id="r15d" style="left:314.88px;top:6.00px;font-size:16.3px;color:#1e1e1e;transform:scaleX(1.1208);transform-origin:0 0;">加入していない（その他）</div>
<div class="t" id="r15e" style="right:3.99px;top:7.20px;font-size:18px;color:#1e1e1e;transform:scaleX(0.9659);transform-origin:100% 0;">1.4</div>
</div>
<div class="a" style="left:37px;top:609px;width:811px;height:30px;background:#daf2d0;overflow:hidden">
<div class="t" id="r16a" style="right:713.12px;top:6.90px;font-size:18px;color:#1e1e1e;transform:scaleX(1.0872);transform-origin:100% 0;">2024/10/1</div>
<div class="t" id="r16b" style="left:104.44px;top:6.70px;font-size:16.3px;color:#1e1e1e;transform:scaleX(1.1556);transform-origin:0 0;">性別</div>
<div class="t" id="r16c" style="left:190.44px;top:6.70px;font-size:16.3px;color:#1e1e1e;transform:scaleX(1.1556);transform-origin:0 0;">女</div>
<div class="t" id="r16d" style="left:314.88px;top:6.00px;font-size:16.3px;color:#1e1e1e;transform:scaleX(1.1208);transform-origin:0 0;">不明</div>
<div class="t" id="r16e" style="right:3.99px;top:7.20px;font-size:18px;color:#1e1e1e;transform:scaleX(0.9659);transform-origin:100% 0;">0.1</div>
</div>
<div class="a" style="left:37px;top:639px;width:811px;height:30px;background:#fff;overflow:hidden">
<div class="a" style="left:101px;top:0;width:1px;height:30px;background:#d9d9d9"></div>
<div class="a" style="left:187px;top:0;width:1px;height:30px;background:#d9d9d9"></div>
<div class="a" style="left:311px;top:0;width:1px;height:30px;background:#d9d9d9"></div>
<div class="a" style="left:707px;top:0;width:1px;height:30px;background:#d9d9d9"></div>
<div class="t" id="r17a" style="right:713.12px;top:6.90px;font-size:18px;color:#1e1e1e;transform:scaleX(1.0872);transform-origin:100% 0;">2024/10/1</div>
<div class="t" id="r17b" style="left:104.44px;top:6.70px;font-size:16.3px;color:#1e1e1e;transform:scaleX(1.1556);transform-origin:0 0;">性別</div>
<div class="t" id="r17c" style="left:190.44px;top:6.70px;font-size:16.3px;color:#1e1e1e;transform:scaleX(1.1556);transform-origin:0 0;">性別不明</div>
<div class="t" id="r17d" style="left:314.88px;top:6.00px;font-size:16.3px;color:#1e1e1e;transform:scaleX(1.1208);transform-origin:0 0;">加入している</div>
<div class="t" id="r17e" style="right:3.99px;top:7.20px;font-size:18px;color:#1e1e1e;transform:scaleX(0.9659);transform-origin:100% 0;">100</div>
</div>
<div class="a" style="left:37px;top:669px;width:811px;height:30px;background:#daf2d0;overflow:hidden">
<div class="t" id="r18a" style="right:713.12px;top:6.90px;font-size:18px;color:#1e1e1e;transform:scaleX(1.0872);transform-origin:100% 0;">2024/10/1</div>
<div class="t" id="r18b" style="left:104.44px;top:6.70px;font-size:16.3px;color:#1e1e1e;transform:scaleX(1.1556);transform-origin:0 0;">性別</div>
<div class="t" id="r18c" style="left:190.44px;top:6.70px;font-size:16.3px;color:#1e1e1e;transform:scaleX(1.1556);transform-origin:0 0;">性別不明</div>
<div class="t" id="r18d" style="left:314.88px;top:6.00px;font-size:16.3px;color:#1e1e1e;transform:scaleX(1.1208);transform-origin:0 0;">加入していない（加入要件を満たさない）</div>
<div class="t" id="r18e" style="right:3.99px;top:7.20px;font-size:18px;color:#1e1e1e;transform:scaleX(0.9659);transform-origin:100% 0;">0</div>
</div>
<div class="a" style="left:37px;top:699px;width:811px;height:30px;background:#fff;overflow:hidden">
<div class="a" style="left:101px;top:0;width:1px;height:30px;background:#d9d9d9"></div>
<div class="a" style="left:187px;top:0;width:1px;height:30px;background:#d9d9d9"></div>
<div class="a" style="left:311px;top:0;width:1px;height:30px;background:#d9d9d9"></div>
<div class="a" style="left:707px;top:0;width:1px;height:30px;background:#d9d9d9"></div>
<div class="t" id="r19a" style="right:713.12px;top:6.90px;font-size:18px;color:#1e1e1e;transform:scaleX(1.0872);transform-origin:100% 0;">2024/10/1</div>
<div class="t" id="r19b" style="left:104.44px;top:6.70px;font-size:16.3px;color:#1e1e1e;transform:scaleX(1.1556);transform-origin:0 0;">性別</div>
<div class="t" id="r19c" style="left:190.44px;top:6.70px;font-size:16.3px;color:#1e1e1e;transform:scaleX(1.1556);transform-origin:0 0;">性別不明</div>
<div class="t" id="r19d" style="left:314.88px;top:6.00px;font-size:16.3px;color:#1e1e1e;transform:scaleX(1.1208);transform-origin:0 0;">加入していない（社会保障協定により免除）</div>
<div class="t" id="r19e" style="right:3.99px;top:7.20px;font-size:18px;color:#1e1e1e;transform:scaleX(0.9659);transform-origin:100% 0;">0</div>
</div>
<div class="a" style="left:37px;top:729px;width:811px;height:30px;background:#daf2d0;overflow:hidden">
<div class="t" id="r20a" style="right:713.12px;top:6.90px;font-size:18px;color:#1e1e1e;transform:scaleX(1.0872);transform-origin:100% 0;">2024/10/1</div>
<div class="t" id="r20b" style="left:104.44px;top:6.70px;font-size:16.3px;color:#1e1e1e;transform:scaleX(1.1556);transform-origin:0 0;">性別</div>
<div class="t" id="r20c" style="left:190.44px;top:6.70px;font-size:16.3px;color:#1e1e1e;transform:scaleX(1.1556);transform-origin:0 0;">性別不明</div>
<div class="t" id="r20d" style="left:314.88px;top:6.00px;font-size:16.3px;color:#1e1e1e;transform:scaleX(1.1208);transform-origin:0 0;">加入していない（その他）</div>
<div class="t" id="r20e" style="right:3.99px;top:7.20px;font-size:18px;color:#1e1e1e;transform:scaleX(0.9659);transform-origin:100% 0;">0</div>
</div>
<div class="a" style="left:37px;top:759px;width:811px;height:30px;background:#fff;overflow:hidden">
<div class="a" style="left:101px;top:0;width:1px;height:30px;background:#d9d9d9"></div>
<div class="a" style="left:187px;top:0;width:1px;height:30px;background:#d9d9d9"></div>
<div class="a" style="left:311px;top:0;width:1px;height:30px;background:#d9d9d9"></div>
<div class="a" style="left:707px;top:0;width:1px;height:30px;background:#d9d9d9"></div>
<div class="t" id="r21a" style="right:713.12px;top:6.90px;font-size:18px;color:#1e1e1e;transform:scaleX(1.0872);transform-origin:100% 0;">2024/10/1</div>
<div class="t" id="r21b" style="left:104.44px;top:6.70px;font-size:16.3px;color:#1e1e1e;transform:scaleX(1.1556);transform-origin:0 0;">性別</div>
<div class="t" id="r21c" style="left:190.44px;top:6.70px;font-size:16.3px;color:#1e1e1e;transform:scaleX(1.1556);transform-origin:0 0;">性別不明</div>
<div class="t" id="r21d" style="left:314.88px;top:6.00px;font-size:16.3px;color:#1e1e1e;transform:scaleX(1.1208);transform-origin:0 0;">不明</div>
<div class="t" id="r21e" style="right:3.99px;top:7.20px;font-size:18px;color:#1e1e1e;transform:scaleX(0.9659);transform-origin:100% 0;">0</div>
</div>
<div class="a" style="left:37px;top:789px;width:811px;height:30px;background:#daf2d0;overflow:hidden">
<div class="t" id="r22a" style="right:713.12px;top:6.90px;font-size:18px;color:#1e1e1e;transform:scaleX(1.0872);transform-origin:100% 0;">2024/10/1</div>
<div class="t" id="r22b" style="left:104.44px;top:6.70px;font-size:16.3px;color:#1e1e1e;transform:scaleX(1.1556);transform-origin:0 0;">年齢階級</div>
<div class="t" id="r22c" style="left:190.44px;top:6.70px;font-size:16.3px;color:#1e1e1e;transform:scaleX(1.1556);transform-origin:0 0;">19歳以下</div>
<div class="t" id="r22d" style="left:314.88px;top:6.00px;font-size:16.3px;color:#1e1e1e;transform:scaleX(1.1208);transform-origin:0 0;">加入している</div>
<div class="t" id="r22e" style="right:3.99px;top:7.20px;font-size:18px;color:#1e1e1e;transform:scaleX(0.9659);transform-origin:100% 0;">79.5</div>
</div>
<div class="a" style="left:37px;top:819px;width:811px;height:30px;background:#fff;overflow:hidden">
<div class="a" style="left:101px;top:0;width:1px;height:30px;background:#d9d9d9"></div>
<div class="a" style="left:187px;top:0;width:1px;height:30px;background:#d9d9d9"></div>
<div class="a" style="left:311px;top:0;width:1px;height:30px;background:#d9d9d9"></div>
<div class="a" style="left:707px;top:0;width:1px;height:30px;background:#d9d9d9"></div>
<div class="t" id="r23a" style="right:713.12px;top:6.90px;font-size:18px;color:#1e1e1e;transform:scaleX(1.0872);transform-origin:100% 0;">2024/10/1</div>
<div class="t" id="r23b" style="left:104.44px;top:6.70px;font-size:16.3px;color:#1e1e1e;transform:scaleX(1.1556);transform-origin:0 0;">年齢階級</div>
<div class="t" id="r23c" style="left:190.44px;top:6.70px;font-size:16.3px;color:#1e1e1e;transform:scaleX(1.1556);transform-origin:0 0;">19歳以下</div>
<div class="t" id="r23d" style="left:314.88px;top:6.00px;font-size:16.3px;color:#1e1e1e;transform:scaleX(1.1208);transform-origin:0 0;">加入していない（加入要件を満たさない）</div>
<div class="t" id="r23e" style="right:3.99px;top:7.20px;font-size:18px;color:#1e1e1e;transform:scaleX(0.9659);transform-origin:100% 0;">18.7</div>
</div>
<div class="a" style="left:37px;top:849px;width:811px;height:30px;background:#daf2d0;overflow:hidden">
<div class="t" id="r24a" style="right:713.12px;top:6.90px;font-size:18px;color:#1e1e1e;transform:scaleX(1.0872);transform-origin:100% 0;">2024/10/1</div>
<div class="t" id="r24b" style="left:104.44px;top:6.70px;font-size:16.3px;color:#1e1e1e;transform:scaleX(1.1556);transform-origin:0 0;">年齢階級</div>
<div class="t" id="r24c" style="left:190.44px;top:6.70px;font-size:16.3px;color:#1e1e1e;transform:scaleX(1.1556);transform-origin:0 0;">19歳以下</div>
<div class="t" id="r24d" style="left:314.88px;top:6.00px;font-size:16.3px;color:#1e1e1e;transform:scaleX(1.1208);transform-origin:0 0;">加入していない（社会保障協定により免除）</div>
<div class="t" id="r24e" style="right:3.99px;top:7.20px;font-size:18px;color:#1e1e1e;transform:scaleX(0.9659);transform-origin:100% 0;">0.9</div>
</div>
<div class="a" style="left:37px;top:879px;width:811px;height:30px;background:#fff;overflow:hidden">
<div class="a" style="left:101px;top:0;width:1px;height:30px;background:#d9d9d9"></div>
<div class="a" style="left:187px;top:0;width:1px;height:30px;background:#d9d9d9"></div>
<div class="a" style="left:311px;top:0;width:1px;height:30px;background:#d9d9d9"></div>
<div class="a" style="left:707px;top:0;width:1px;height:30px;background:#d9d9d9"></div>
<div class="t" id="r25a" style="right:713.12px;top:6.90px;font-size:18px;color:#1e1e1e;transform:scaleX(1.0872);transform-origin:100% 0;">2024/10/1</div>
<div class="t" id="r25b" style="left:104.44px;top:6.70px;font-size:16.3px;color:#1e1e1e;transform:scaleX(1.1556);transform-origin:0 0;">年齢階級</div>
<div class="t" id="r25c" style="left:190.44px;top:6.70px;font-size:16.3px;color:#1e1e1e;transform:scaleX(1.1556);transform-origin:0 0;">19歳以下</div>
<div class="t" id="r25d" style="left:314.88px;top:6.00px;font-size:16.3px;color:#1e1e1e;transform:scaleX(1.1208);transform-origin:0 0;">加入していない（その他）</div>
<div class="t" id="r25e" style="right:3.99px;top:7.20px;font-size:18px;color:#1e1e1e;transform:scaleX(0.9659);transform-origin:100% 0;">0.9</div>
</div>
<div class="a" style="left:37px;top:909px;width:811px;height:30px;background:#daf2d0;overflow:hidden">
<div class="t" id="r26a" style="right:713.12px;top:6.90px;font-size:18px;color:#1e1e1e;transform:scaleX(1.0872);transform-origin:100% 0;">2024/10/1</div>
<div class="t" id="r26b" style="left:104.44px;top:6.70px;font-size:16.3px;color:#1e1e1e;transform:scaleX(1.1556);transform-origin:0 0;">年齢階級</div>
<div class="t" id="r26c" style="left:190.44px;top:6.70px;font-size:16.3px;color:#1e1e1e;transform:scaleX(1.1556);transform-origin:0 0;">19歳以下</div>
<div class="t" id="r26d" style="left:314.88px;top:6.00px;font-size:16.3px;color:#1e1e1e;transform:scaleX(1.1208);transform-origin:0 0;">不明</div>
<div class="t" id="r26e" style="right:3.99px;top:7.20px;font-size:18px;color:#1e1e1e;transform:scaleX(0.9659);transform-origin:100% 0;">0</div>
</div>
<div class="a" style="left:37px;top:939px;width:811px;height:14px;background:#fff;overflow:hidden">
<div class="a" style="left:101px;top:0;width:1px;height:30px;background:#d9d9d9"></div>
<div class="a" style="left:187px;top:0;width:1px;height:30px;background:#d9d9d9"></div>
<div class="a" style="left:311px;top:0;width:1px;height:30px;background:#d9d9d9"></div>
<div class="a" style="left:707px;top:0;width:1px;height:30px;background:#d9d9d9"></div>
<div class="t" id="r27a" style="right:713.12px;top:6.90px;font-size:18px;color:#1e1e1e;transform:scaleX(1.0872);transform-origin:100% 0;">2024/10/1</div>
<div class="t" id="r27b" style="left:104.44px;top:6.70px;font-size:16.3px;color:#1e1e1e;transform:scaleX(1.1556);transform-origin:0 0;">年齢階級</div>
<div class="t" id="r27c" style="left:190.44px;top:6.70px;font-size:16.3px;color:#1e1e1e;transform:scaleX(1.1556);transform-origin:0 0;">20～29歳</div>
<div class="t" id="r27d" style="left:314.88px;top:6.00px;font-size:16.3px;color:#1e1e1e;transform:scaleX(1.1208);transform-origin:0 0;">加入している</div>
<div class="t" id="r27e" style="right:3.99px;top:7.20px;font-size:18px;color:#1e1e1e;transform:scaleX(0.9659);transform-origin:100% 0;">88.6</div>
</div>
<div class="a" style="left:37px;top:189px;width:812px;height:1px;background:#8ed973"></div>
<div class="a" style="left:37px;top:219px;width:812px;height:1px;background:#8ed973"></div>
<div class="a" style="left:37px;top:249px;width:812px;height:1px;background:#8ed973"></div>
<div class="a" style="left:37px;top:279px;width:812px;height:1px;background:#8ed973"></div>
<div class="a" style="left:37px;top:309px;width:812px;height:1px;background:#8ed973"></div>
<div class="a" style="left:37px;top:339px;width:812px;height:1px;background:#8ed973"></div>
<div class="a" style="left:37px;top:369px;width:812px;height:1px;background:#8ed973"></div>
<div class="a" style="left:37px;top:399px;width:812px;height:1px;background:#8ed973"></div>
<div class="a" style="left:37px;top:429px;width:812px;height:1px;background:#8ed973"></div>
<div class="a" style="left:37px;top:459px;width:812px;height:1px;background:#8ed973"></div>
<div class="a" style="left:37px;top:489px;width:812px;height:1px;background:#8ed973"></div>
<div class="a" style="left:37px;top:519px;width:812px;height:1px;background:#8ed973"></div>
<div class="a" style="left:37px;top:549px;width:812px;height:1px;background:#8ed973"></div>
<div class="a" style="left:37px;top:579px;width:812px;height:1px;background:#8ed973"></div>
<div class="a" style="left:37px;top:609px;width:812px;height:1px;background:#8ed973"></div>
<div class="a" style="left:37px;top:639px;width:812px;height:1px;background:#8ed973"></div>
<div class="a" style="left:37px;top:669px;width:812px;height:1px;background:#8ed973"></div>
<div class="a" style="left:37px;top:699px;width:812px;height:1px;background:#8ed973"></div>
<div class="a" style="left:37px;top:729px;width:812px;height:1px;background:#8ed973"></div>
<div class="a" style="left:37px;top:759px;width:812px;height:1px;background:#8ed973"></div>
<div class="a" style="left:37px;top:789px;width:812px;height:1px;background:#8ed973"></div>
<div class="a" style="left:37px;top:819px;width:812px;height:1px;background:#8ed973"></div>
<div class="a" style="left:37px;top:849px;width:812px;height:1px;background:#8ed973"></div>
<div class="a" style="left:37px;top:879px;width:812px;height:1px;background:#8ed973"></div>
<div class="a" style="left:37px;top:909px;width:812px;height:1px;background:#8ed973"></div>
<div class="a" style="left:37px;top:939px;width:812px;height:1px;background:#8ed973"></div>
<div class="a" style="left:848px;top:128px;width:1px;height:825px;background:#8ed973"></div>
<div class="a" style="left:35px;top:126px;width:105px;height:64.5px;border:2px solid #0f6b37"></div>
<div class="a" style="left:37px;top:128px;width:101px;height:60.5px;border:1px solid #fff"></div>
<div class="a" style="left:134px;top:185px;width:7px;height:7px;background:#fff"></div>
<div class="a" style="left:135px;top:186px;width:6px;height:6px;background:#0f6b37"></div>
<div class="a" style="left:1894px;top:98px;width:26px;height:855px;background:#e6e9ef"></div>
<div class="a" style="left:1897px;top:99px;width:21px;height:857px;border-radius:10.5px;background:#f3f3f3"></div>
<svg class="a" style="left:1900px;top:102px" width="15" height="13"><path d="M7.5 2.5L13 10.5H2Z" fill="#717171" stroke="#717171" stroke-width="1" stroke-linejoin="round"/></svg>
<div class="a" style="left:1902px;top:119px;width:11px;height:379px;border-radius:5.5px;background:#717171"></div>
<svg class="a" style="left:1900px;top:938px" width="15" height="13"><path d="M7.5 11L13 3H2Z" fill="#717171" stroke="#717171" stroke-width="1" stroke-linejoin="round"/></svg>
<div class="a" style="left:0;top:953px;width:1920px;height:38px;background:#e6e9ef"></div>
<svg class="a" style="left:28px;top:963px" width="16" height="20" viewBox="0 0 16 20" fill="none" stroke="#8a8a8a" stroke-width="1.2"><path d="M11 4.5L5.5 10L11 15.5"/></svg>
<svg class="a" style="left:68px;top:963px" width="16" height="20" viewBox="0 0 16 20" fill="none" stroke="#8a8a8a" stroke-width="1.2"><path d="M5 4.5L10.5 10L5 15.5"/></svg>
<div class="a" style="left:141px;top:953px;width:62px;height:35px;background:#fff;border-radius:7px;box-shadow:0 0 0 0.5px #d4d7dc"></div>
<div class="t" id="t_data" style="left:151.93px;top:960.30px;font-size:18px;color:#242424;transform:scaleX(1.0590);transform-origin:0 0;">data</div>
<div class="a" style="left:151px;top:983px;width:41px;height:2px;background:#107c41"></div>
<div class="a" style="left:207px;top:962px;width:1px;height:22px;background:#c8c8c8"></div>
<div class="t" id="t_pivot" style="left:224.91px;top:963.00px;font-size:18px;color:#242424;transform:scaleX(1.0920);transform-origin:0 0;">pivot</div>
<div class="a" style="left:284px;top:962px;width:1px;height:22px;background:#c8c8c8"></div>
<svg class="a" style="left:335px;top:963px" width="18" height="18" viewBox="0 0 18 18" fill="none" stroke="#242424" stroke-width="1.4"><path d="M9 2V16M2 9H16"/></svg>
<div class="a" style="left:1154px;top:967px;width:3px;height:3px;background:#242424"></div>
<div class="a" style="left:1154px;top:972px;width:3px;height:3px;background:#242424"></div>
<div class="a" style="left:1154px;top:977px;width:3px;height:3px;background:#242424"></div>
<div class="a" style="left:1176px;top:962px;width:721px;height:21px;border-radius:10.5px;background:#f3f3f3"></div>
<svg class="a" style="left:1180px;top:965px" width="13" height="15"><path d="M2.5 7.5L10.5 2V13Z" fill="#717171" stroke="#717171" stroke-width="1" stroke-linejoin="round"/></svg>
<div class="a" style="left:1197px;top:967px;width:674px;height:11px;border-radius:5.5px;background:#717171"></div>
<svg class="a" style="left:1880px;top:965px" width="13" height="15"><path d="M10.5 7.5L2.5 2V13Z" fill="#717171" stroke="#717171" stroke-width="1" stroke-linejoin="round"/></svg>
</body></html>
